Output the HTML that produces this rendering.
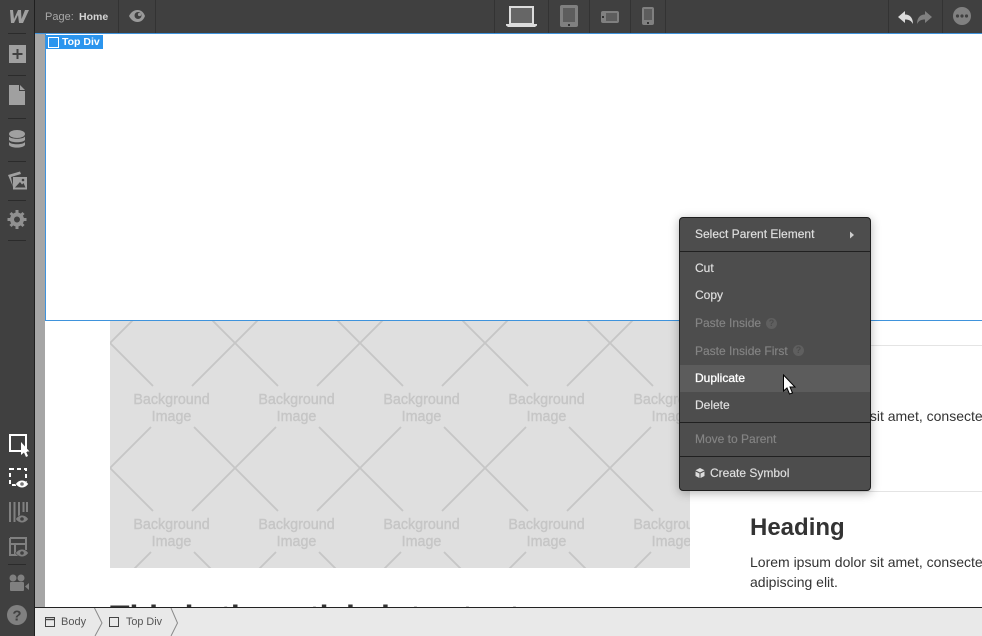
<!DOCTYPE html>
<html><head><meta charset="utf-8"><style>
html,body{margin:0;padding:0;width:982px;height:636px;overflow:hidden;background:#fff;font-family:"Liberation Sans",Arial,sans-serif}
.a{position:absolute}
.t{position:absolute;white-space:nowrap}
.mi{position:absolute;left:695px;font-size:12px;line-height:14px;color:#e0e0e0;white-space:nowrap;-webkit-text-stroke:.15px currentColor}
.dis{color:#848484}
.sep{position:absolute;left:680px;width:190px;height:1px;background:#202020}
.q{position:absolute;width:11px;height:11px;border-radius:50%;background:#5f5f5f;color:#4d4d4d;font:bold 9px/11px "Liberation Sans",sans-serif;text-align:center}
.h{font:bold 32px/36px "Liberation Sans",sans-serif;color:#333;top:4px}
</style></head><body>
<!-- canvas -->
<div class="a" style="left:35px;top:34px;width:10px;height:573px;background:#a6a6a6"></div>
<svg class="a" style="left:110px;top:321px" width="580" height="247" viewBox="0 0 580 247">
<defs><pattern id="p" x="0" y="22" width="125" height="125" patternUnits="userSpaceOnUse">
<path d="M0 0L43 43M82 43L125 0M41 84L0 125M84 84L125 125" stroke="#c6c6c6" stroke-width="1.8" fill="none"/></pattern></defs>
<rect width="580" height="247" fill="#dfdfdf"/><rect width="580" height="247" fill="url(#p)"/>
<g font-family="Liberation Sans,sans-serif" font-size="14.3" fill="#c6c6c6" text-anchor="middle" stroke="#c6c6c6" stroke-width=".4">
<text x="61.5" y="83">Background</text><text x="61.5" y="100">Image</text>
<text x="186.5" y="83">Background</text><text x="186.5" y="100">Image</text>
<text x="311.5" y="83">Background</text><text x="311.5" y="100">Image</text>
<text x="436.5" y="83">Background</text><text x="436.5" y="100">Image</text>
<text x="561.5" y="83">Background</text><text x="561.5" y="100">Image</text>
<text x="61.5" y="208">Background</text><text x="61.5" y="225">Image</text>
<text x="186.5" y="208">Background</text><text x="186.5" y="225">Image</text>
<text x="311.5" y="208">Background</text><text x="311.5" y="225">Image</text>
<text x="436.5" y="208">Background</text><text x="436.5" y="225">Image</text>
<text x="561.5" y="208">Background</text><text x="561.5" y="225">Image</text>
</g></svg>
<div class="a" style="left:750px;top:345px;width:232px;height:1px;background:#e4e4e4"></div>
<div class="a" style="left:750px;top:491px;width:232px;height:1px;background:#e4e4e4"></div>
<div class="t" style="left:750px;top:406px;font-size:14px;line-height:20px;color:#333">Lorem ipsum dolor sit amet, consectetur</div>
<div class="t" style="left:750px;top:514px;font-size:24px;line-height:28px;font-weight:bold;color:#333">Heading</div>
<div class="t" style="left:750px;top:552px;width:300px;font-size:14px;line-height:20px;color:#333;white-space:normal">Lorem ipsum dolor sit amet, consectetur<br>adipiscing elit.</div>
<div class="a" style="left:35px;top:595px;width:947px;height:12px;overflow:hidden">
<div class="t h" style="left:75px">This is the</div>
<div class="t h" style="left:274px">th</div>
<div class="t h" style="left:311px">l</div>
<div class="t h" style="left:346px">l</div>
<div class="t h" style="left:375px">t</div>
<div class="t h" style="left:427px">t</div>
<div class="t h" style="left:474px">t</div>
</div>
<!-- top div -->
<div class="a" style="left:45px;top:34px;width:937px;height:286px;background:#fff;border-left:1px solid #3f93dc;border-bottom:1px solid #3f93dc"></div>
<div class="a" style="left:46px;top:35px;width:57px;height:14px;background:#2b95ee"></div>
<div class="a" style="left:48px;top:37px;width:9px;height:9px;border:1px solid #fff"></div>
<div class="t" style="left:62px;top:35px;font:bold 10.5px/14px 'Liberation Sans',sans-serif;color:#fff">Top Div</div>
<!-- top bar -->
<div class="a" style="left:0;top:0;width:982px;height:33px;background:#404040"></div>
<div class="a" style="left:35px;top:33px;width:947px;height:1px;background:#3f93dc"></div>
<div class="t" style="left:45px;top:10px;font-size:11px;line-height:14px;color:#a8a8a8">Page:</div>
<div class="t" style="left:79px;top:10px;font-size:10.5px;line-height:14px;font-weight:bold;color:#d4d4d4">Home</div>
<svg class="a" style="left:0;top:0" width="982" height="34" viewBox="0 0 982 34">
<path d="M118.5 0V33M155.5 0V33M494.5 0V33M548.5 0V33M589.5 0V33M630.5 0V33M665.5 0V33M888.5 0V33M942.5 0V33" stroke="#333" fill="none"/>
<!-- eye -->
<path d="M129 16C131 12 134 10 137.5 10C141 10 143.5 12 145 16C143.5 20 141 22 137.5 22C134 22 131 20 129 16Z" fill="#9a9a9a"/><circle cx="138" cy="15.5" r="3.5" fill="#404040"/><circle cx="139.5" cy="14.5" r="1.6" fill="#9a9a9a"/>
<!-- laptop -->
<rect x="510" y="7" width="23" height="17" fill="#666" stroke="#dcdcdc" stroke-width="2"/>
<path d="M506 24H537V25.5L535 27H508L506 25.5Z" fill="#dcdcdc"/>
<!-- tablet -->
<rect x="560" y="5" width="18" height="22" rx="2" fill="#808080"/><rect x="563" y="8" width="12" height="14" fill="#5d5d5d"/><rect x="568" y="24" width="2" height="2" fill="#333"/>
<!-- landscape -->
<rect x="601" y="11" width="18" height="12" rx="2" fill="#808080"/><rect x="606" y="13" width="11" height="8" fill="#5d5d5d"/><rect x="602" y="16" width="2" height="2" fill="#333"/>
<!-- phone -->
<rect x="642" y="7" width="12" height="18" rx="2" fill="#808080"/><rect x="644" y="9" width="8" height="11" fill="#5d5d5d"/><rect x="647" y="22" width="2" height="2" fill="#333"/>
<!-- undo/redo -->
<path d="M898 17L905 11V14.5C910 14.5 913 18 913 24C911 20.5 909 19.5 905 19.5V23Z" fill="#dcdcdc"/>
<path d="M932 17L925 11V14.5C920 14.5 917 18 917 24C919 20.5 921 19.5 925 19.5V23Z" fill="#808080"/>
<!-- more -->
<circle cx="962" cy="16" r="9" fill="#808080"/><circle cx="957.5" cy="16" r="1.6" fill="#404040"/><circle cx="962" cy="16" r="1.6" fill="#404040"/><circle cx="966.5" cy="16" r="1.6" fill="#404040"/>
</svg>
<!-- sidebar -->
<div class="a" style="left:0;top:0;width:34px;height:636px;background:#404040;border-right:1px solid #1f1f1f"></div>
<svg class="a" style="left:0;top:0" width="34" height="636" viewBox="0 0 34 636">
<path d="M8 33.5H26M8 75.5H26M8 118.5H26M8 161.5H26M8 200.5H26M8 240.5H26M8 564.5H26" stroke="#2b2b2b" fill="none"/>
<path d="M10 10L13 10L14 19L18 10H21L21.5 19L25 10H29L23 23H19L18 15L14 23H11Z" fill="#a0a0a0"/>
<rect x="9" y="45" width="17" height="18" fill="#a0a0a0"/><path d="M17.5 49V59M12.5 54H22.5" stroke="#404040" stroke-width="2"/>
<path d="M9 85H19V91H25V105H9ZM20 85L25 90H20Z" fill="#a0a0a0"/>
<ellipse cx="17" cy="134" rx="8" ry="4" fill="#a0a0a0"/><path d="M9 136.5C11 139.5 23 139.5 25 136.5V140C23 143 11 143 9 140Z" fill="#a0a0a0"/><path d="M9 142C11 145 23 145 25 142V145C23 148.5 11 148.5 9 145Z" fill="#a0a0a0"/>
<path d="M8 175L20 171.5L21 174L11 177L13 187Z" fill="#a0a0a0"/><rect x="13" y="177" width="14" height="12.5" fill="#a0a0a0"/><path d="M15 187.5L20 182L22 184.5L23.5 183L25.5 187.5Z" fill="#404040"/><circle cx="23" cy="180" r="1.3" fill="#404040"/>
<circle cx="17" cy="219.5" r="5" fill="none" stroke="#909090" stroke-width="4"/>
<path d="M17 210V213M17 226V229M7.5 219.5H10.5M23.5 219.5H26.5M10.5 213L12.5 215M21.5 224L23.500 226M23.5 213L21.5 215M12.5 224L10.5 226" stroke="#909090" stroke-width="3"/>
<rect x="10" y="435" width="16" height="16" fill="none" stroke="#fff" stroke-width="2"/>
<path d="M21 442V455L24 452.5L26 457L28 456L26 451.5H29.5Z" fill="#fff"/>
<rect x="10" y="469" width="16" height="16" fill="none" stroke="#fff" stroke-width="2" stroke-dasharray="4 3"/>
<path d="M15.500 484C19 479 25 479 28.500 484C25 489 19 489 15.500 484Z" fill="#fff" stroke="#404040" stroke-width=".6"/><circle cx="22" cy="484" r="1.800" fill="#777"/>
<path d="M10 502V522M14.5 502V522M19 502V516M23.5 502V512M27 502V512" stroke="#808080" stroke-width="2"/>
<path d="M15.500 519C19 514 25 514 28.500 519C25 524 19 524 15.500 519Z" fill="#808080" stroke="#404040" stroke-width=".6"/><circle cx="22" cy="519" r="1.800" fill="#404040"/>
<path d="M10 538H26V550M10 538V555H18M10 544H26M15 544V555" stroke="#808080" stroke-width="2" fill="none"/>
<path d="M15.500 553C19 548 25 548 28.500 553C25 558 19 558 15.500 553Z" fill="#808080" stroke="#404040" stroke-width=".6"/><circle cx="22" cy="553" r="1.800" fill="#404040"/>
<circle cx="13" cy="578" r="3.5" fill="#808080"/><circle cx="21" cy="578" r="3.5" fill="#808080"/><rect x="10" y="582" width="14" height="9" rx="1" fill="#808080"/><path d="M25 586.5L29 583V590Z" fill="#808080"/>
<circle cx="17" cy="615" r="10" fill="#808080"/>
<text x="17" y="620.5" text-anchor="middle" font-family="Liberation Sans,sans-serif" font-size="15" font-weight="bold" fill="#404040">?</text>
</svg>
<!-- bottom bar -->
<div class="a" style="left:35px;top:607px;width:947px;height:29px;background:#e9e9e9;border-top:1px solid #222;box-sizing:border-box"></div>
<svg class="a" style="left:35px;top:608px" width="947" height="28" viewBox="0 0 947 28">
<path d="M59.5 0L67 15L60 28M136 0L142.5 15L136 28" stroke="#8a8a8a" fill="none"/>
<rect x="10.5" y="9.5" width="9" height="9" fill="none" stroke="#444"/><path d="M10.5 11.5H19.5" stroke="#444" stroke-width="1.4"/>
<rect x="74.5" y="9.5" width="9" height="9" fill="none" stroke="#444"/>
</svg>
<div class="t" style="left:61px;top:615px;font-size:11px;line-height:14px;color:#555">Body</div>
<div class="t" style="left:126px;top:615px;font-size:10.8px;line-height:14px;color:#555">Top Div</div>
<!-- context menu -->
<div class="a" style="left:679px;top:217px;width:190px;height:272px;background:#4d4d4d;border:1px solid #1e1e1e;border-radius:4px;box-shadow:0 2px 10px rgba(0,0,0,.3)"></div>
<div class="a" style="left:680px;top:365px;width:190px;height:27px;background:#5c5c5c"></div>
<div class="sep" style="top:251px"></div><div class="sep" style="top:422px"></div><div class="sep" style="top:456px"></div>
<div class="mi" style="top:227px">Select Parent Element</div>
<svg class="a" style="left:849px;top:231px" width="6" height="8"><path d="M1 0.5L5 4L1 7.5Z" fill="#ccc"/></svg>
<div class="mi" style="top:261px">Cut</div>
<div class="mi" style="top:288px">Copy</div>
<div class="mi dis" style="top:316px">Paste Inside</div><div class="q" style="left:766px;top:318px">?</div>
<div class="mi dis" style="top:344px">Paste Inside First</div><div class="q" style="left:793px;top:345px">?</div>
<div class="mi" style="top:371px;color:#fff;-webkit-text-stroke:.3px #fff">Duplicate</div>
<div class="mi" style="top:398px">Delete</div>
<div class="mi dis" style="top:432px">Move to Parent</div>
<svg class="a" style="left:695px;top:468px" width="10" height="10"><path d="M5 0L9.5 2.2L5 4.5L.5 2.2ZM.5 3.5L4.5 5.5V10L.5 8ZM9.5 3.5L5.5 5.5V10L9.5 8Z" fill="#dcdcdc"/></svg>
<div class="mi" style="left:710px;top:466px">Create Symbol</div>
<!-- cursor -->
<svg class="a" style="left:782px;top:374px" width="15" height="22"><path d="M1.5 1V17L5 14L7.5 20L10.5 19L8 13H13Z" fill="#fff" stroke="#000"/></svg>
</body></html>
